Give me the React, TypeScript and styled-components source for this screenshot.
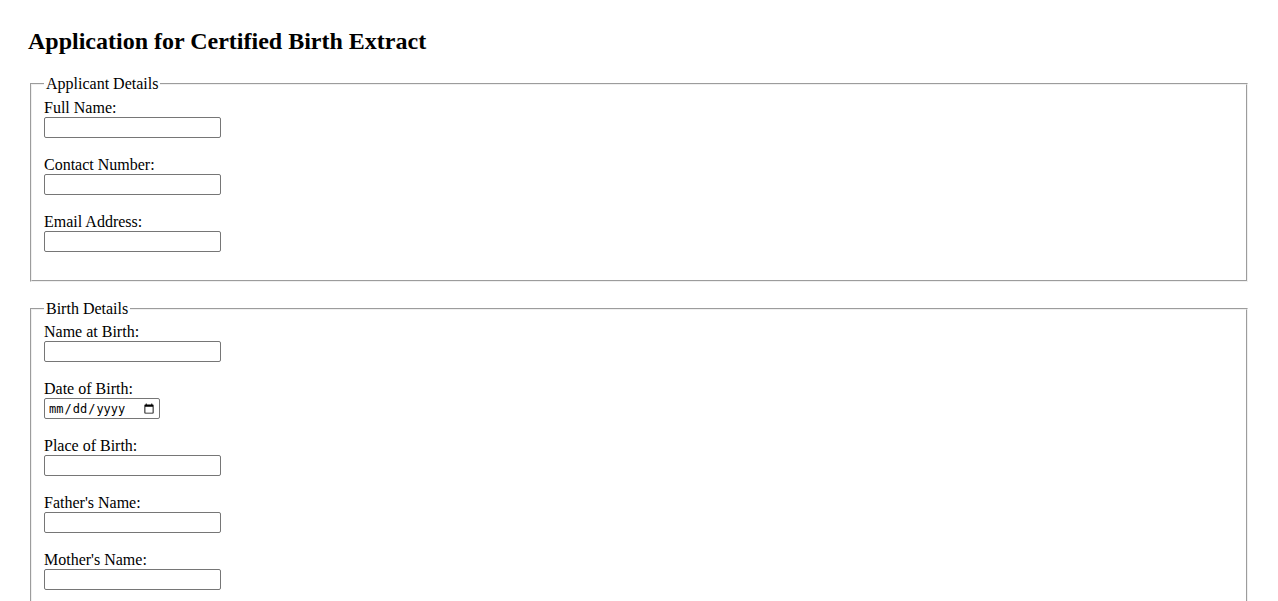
import React from "react";
import styled, { createGlobalStyle } from "styled-components";

const Global = createGlobalStyle`
  html, body { margin: 0; padding: 0; background: #fff; }
  body {
    font-family: "Liberation Serif", "Times New Roman", serif;
    font-size: 16px;
    color: #000;
  }
`;

const Page = styled.div`
  padding: 28px;
`;

const Title = styled.h2`
  font-family: "Liberation Serif", "Times New Roman", serif;
  font-size: 24px;
  font-weight: bold;
  margin: 0 0 20px 0;
  line-height: normal;
`;

const Fieldset = styled.fieldset`
  margin: 0 2px 18px 2px;
  padding: 0.35em 0.75em 0.625em;
  border: 2px groove #f0f0f0;
  min-inline-size: min-content;
`;

const Legend = styled.legend`
  padding: 0 2px;
  font-size: 16px;
  line-height: 18px;
`;

const Field = styled.div`
  display: flex;
  flex-direction: column;
  align-items: flex-start;
  margin-bottom: 18px;
`;

const Label = styled.label`
  display: block;
  line-height: 18px;
`;

const TextInput = styled.input<{ $w?: number }>`
  box-sizing: border-box;
  width: ${(p) => p.$w ?? 177}px;
  height: 21px;
  margin: 0;
  padding: 1px 2px;
  border: 1px solid #767676;
  border-radius: 2px;
  background: #fff;
  font-family: "Liberation Sans", Arial, sans-serif;
  font-size: 13.333px;
`;

const DateInput = styled(TextInput)`
  font-family: "DejaVu Sans Mono", "Liberation Mono", monospace;
  font-size: 12px;
  color: #000;
  padding: 1px 2px 1px 3px;
`;

const applicant = [
  { id: "fullName", label: "Full Name:" },
  { id: "contact", label: "Contact Number:" },
  { id: "email", label: "Email Address:" },
];

const birth = [
  { id: "nameAtBirth", label: "Name at Birth:", type: "text" },
  { id: "dob", label: "Date of Birth:", type: "date" },
  { id: "pob", label: "Place of Birth:", type: "text" },
  { id: "father", label: "Father's Name:", type: "text" },
  { id: "mother", label: "Mother's Name:", type: "text" },
];

export default function App() {
  return (
    <>
      <Global />
      <Page>
        <Title>Application for Certified Birth Extract</Title>
        <form>
          <Fieldset>
            <Legend>Applicant Details</Legend>
            {applicant.map((f) => (
              <Field key={f.id}>
                <Label htmlFor={f.id}>{f.label}</Label>
                <TextInput id={f.id} type="text" />
              </Field>
            ))}
          </Fieldset>
          <Fieldset>
            <Legend>Birth Details</Legend>
            {birth.map((f) => (
              <Field key={f.id}>
                <Label htmlFor={f.id}>{f.label}</Label>
                {f.type === "date" ? (
                  <DateInput id={f.id} type="date" $w={116} />
                ) : (
                  <TextInput id={f.id} type="text" />
                )}
              </Field>
            ))}
          </Fieldset>
        </form>
      </Page>
    </>
  );
}
